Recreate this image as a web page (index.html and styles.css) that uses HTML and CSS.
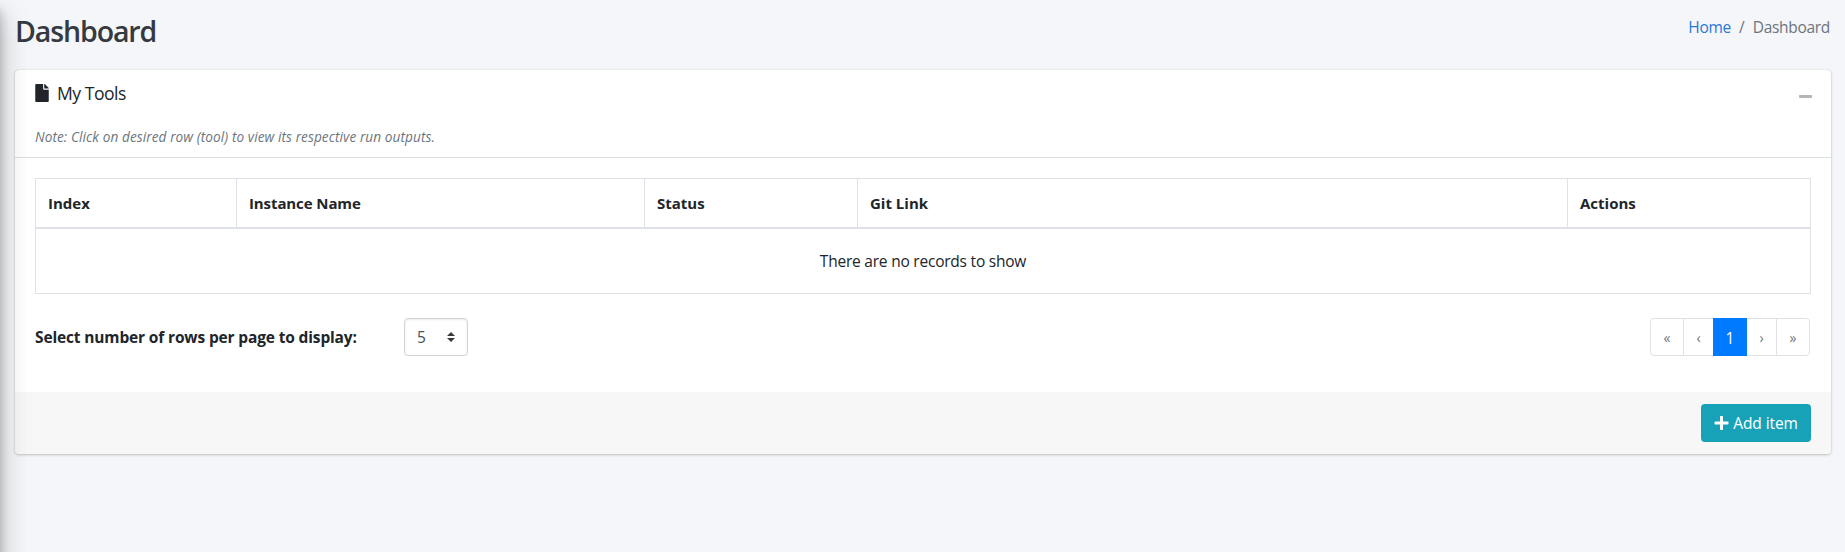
FILE: index.html
```html
<!DOCTYPE html>
<html lang="en">
<head>
<meta charset="utf-8">
<title>Dashboard</title>
<link rel="stylesheet" href="styles.css">
</head>
<body>
<aside class="sidebar"></aside>
<main class="content">
  <header class="page-header">
    <h1 class="page-title">Dashboard</h1>
    <nav class="breadcrumb"><a class="crumb-link" href="#">Home</a><span class="crumb-sep">/</span><span class="crumb-current">Dashboard</span></nav>
  </header>
  <section class="card">
    <div class="card-header">
      <div class="card-heading">
        <h2 class="card-title"><svg class="file-icon" viewBox="0 0 384 512"><path fill="currentColor" d="M224 136V0H24C10.700 0 0 10.700 0 24v464c0 13.300 10.700 24 24 24h336c13.300 0 24-10.700 24-24V160H248c-13.200 0-24-10.800-24-24zm160-14.100v6.100H256V0h6.100c6.400 0 12.500 2.500 17 7l97.900 98c4.500 4.500 7 10.600 7 16.900z"/></svg><span class="title-text">My Tools</span></h2>
        <button class="collapse" aria-label="Collapse"><svg class="minus-icon" viewBox="0 0 448 512"><path fill="currentColor" d="M416 208H32c-17.670 0-32 14.330-32 32v32c0 17.670 14.330 32 32 32h384c17.670 0 32-14.330 32-32v-32c0-17.670-14.330-32-32-32z"/></svg></button>
      </div>
      <p class="note"><span>Note: Click on desired row (tool) to view its respective run outputs.</span></p>
    </div>
    <div class="card-body">
      <table class="tools">
        <colgroup><col class="col-index"><col class="col-name"><col class="col-status"><col class="col-git"><col class="col-actions"></colgroup>
        <thead><tr><th>Index</th><th class="th-name">Instance Name</th><th>Status</th><th>Git Link</th><th>Actions</th></tr></thead>
        <tbody><tr><td colspan="5"><span class="empty">There are no records to show</span></td></tr></tbody>
      </table>
      <div class="controls">
        <span class="rows-label">Select number of rows per page to display:</span>
        <div class="select"><span>5</span><svg class="caret" viewBox="0 0 4 5"><path fill="#343a40" d="M2 0L0 2h4zm0 5L0 3h4z"/></svg></div>
        <ul class="pagination"><li class="page outer">«</li><li class="page inner">‹</li><li class="page active">1</li><li class="page inner">›</li><li class="page outer">»</li></ul>
      </div>
    </div>
    <div class="card-footer">
      <button class="add"><svg class="plus-icon" viewBox="0 0 448 512"><path fill="currentColor" d="M416 208H272V64c0-17.670-14.330-32-32-32h-32c-17.670 0-32 14.330-32 32v144H32c-17.670 0-32 14.330-32 32v32c0 17.670 14.330 32 32 32h144v144c0 17.670 14.330 32 32 32h32c17.670 0 32-14.330 32-32V304h144c17.670 0 32-14.330 32-32v-32c0-17.670-14.330-32-32-32z"/></svg><span class="add-text">Add item</span></button>
    </div>
  </section>
</main>
</body>
</html>
```
FILE: styles.css
```css
* { box-sizing: border-box; }
body {
  margin: 0;
  height: 552px;
  overflow: hidden;
  background: #f4f6f9;
  color: #212529;
  font: 15.500px/24px "Segoe UI", "Open Sans", "Noto Sans", sans-serif;
}
h1, h2, p, ul { margin: 0; padding: 0; }
button { font: inherit; border: 0; padding: 0; }

/* Off-canvas drawer whose shadow falls over the page edge */
.sidebar {
  position: fixed;
  z-index: 2;
  left: -250px;
  top: 0;
  width: 250px;
  height: 600px;
  box-shadow: 0 14px 28px rgba(0, 0, 0, .25), 0 10px 10px rgba(0, 0, 0, .22);
}
.content { padding: 0 14px 0 15px; }
.page-header {
  display: flex;
  justify-content: space-between;
  height: 70px;
  padding: 15px 0 0;
}
.page-title { font-size: 28.500px; line-height: 33px; letter-spacing: -1.100px; font-weight: 600; color: #343a40; }
.breadcrumb { display: flex; line-height: 25px; color: #6c757d; }
.crumb-link { color: #2878d8; text-decoration: none; letter-spacing: -.25px; }
.crumb-sep { padding: 0 8px; }
.crumb-current { letter-spacing: -.3px; padding-right: 1px; }

.card {
  background: #fff;
  border-radius: 4px;
  box-shadow: 0 0 1px rgba(0, 0, 0, .25), 0 1px 3px rgba(0, 0, 0, .2);
}
.card-header { height: 88px; padding: 12px 20px 0; border-bottom: 1px solid #dcdee1; }
.card-heading { display: flex; justify-content: space-between; height: 42px; }
.card-title { display: flex; gap: 8px; font-size: 17.600px; line-height: 23px; font-weight: 400; letter-spacing: -.5px; }
.file-icon { width: 14px; height: 18px; margin-top: 2px; }
.collapse { width: 13px; height: 15px; margin: 7px -1px 0 0; background: none; color: #b2b4b6; }
.minus-icon { display: block; width: 13px; height: 15px; }
.note { font-size: 13.600px; line-height: 26px; font-style: italic; letter-spacing: .09px; color: #6c757d; }

.card-body { height: 234px; padding: 20px; }
.tools { width: 1776px; table-layout: fixed; border-collapse: collapse; }
.col-index { width: 201px; }
.col-name { width: 408px; }
.col-status { width: 213px; }
.col-git { width: 710px; }
.tools th { height: 49px; padding: 1px 12px 0; text-align: left; font-size: 15px; font-weight: 700; border: 1px solid #dee2e6; border-bottom-width: 2px; }
.th-name { letter-spacing: -.1px; }
.tools td { height: 66px; padding: 0; text-align: center; border: 1px solid #dee2e6; }
.empty { letter-spacing: -.22px; }
.controls { display: flex; align-items: center; margin-top: 24px; height: 38px; }
.rows-label { width: 369px; font-weight: 700; letter-spacing: -.15px; white-space: nowrap; }
.select {
  display: flex;
  align-items: center;
  justify-content: space-between;
  width: 64px;
  height: 38px;
  padding: 0 12px;
  border: 1px solid #ced4da;
  border-radius: 4px;
  box-shadow: inset 0 1px 2px rgba(0, 0, 0, .075);
  color: #495057;
}
.caret { width: 8px; height: 10px; }
.pagination { display: flex; margin-left: auto; margin-right: 1px; list-style: none; color: #6c757d; }
.page { height: 38px; border: 1px solid #dee2e6; margin-left: -1px; text-align: center; line-height: 38px; }
.page:first-child { border-radius: 4px 0 0 4px; }
.page:last-child { border-radius: 0 4px 4px 0; }
.outer { width: 34px; font-size: 14px; }
.inner { width: 31px; font-size: 14px; }
.active { position: relative; width: 34px; background: #007bff; border-color: #007bff; color: #fff; }

.card-footer { display: flex; justify-content: flex-end; height: 62px; padding: 12px 20px; background: #f7f7f7; border-radius: 0 0 4px 4px; }
.add { display: flex; align-items: center; justify-content: center; gap: 4px; width: 110px; height: 38px; border-radius: 4px; background: #17a2b8; color: #fff; }
.add-text { letter-spacing: -.1px; }
.plus-icon { width: 15px; height: 16px; }
```
